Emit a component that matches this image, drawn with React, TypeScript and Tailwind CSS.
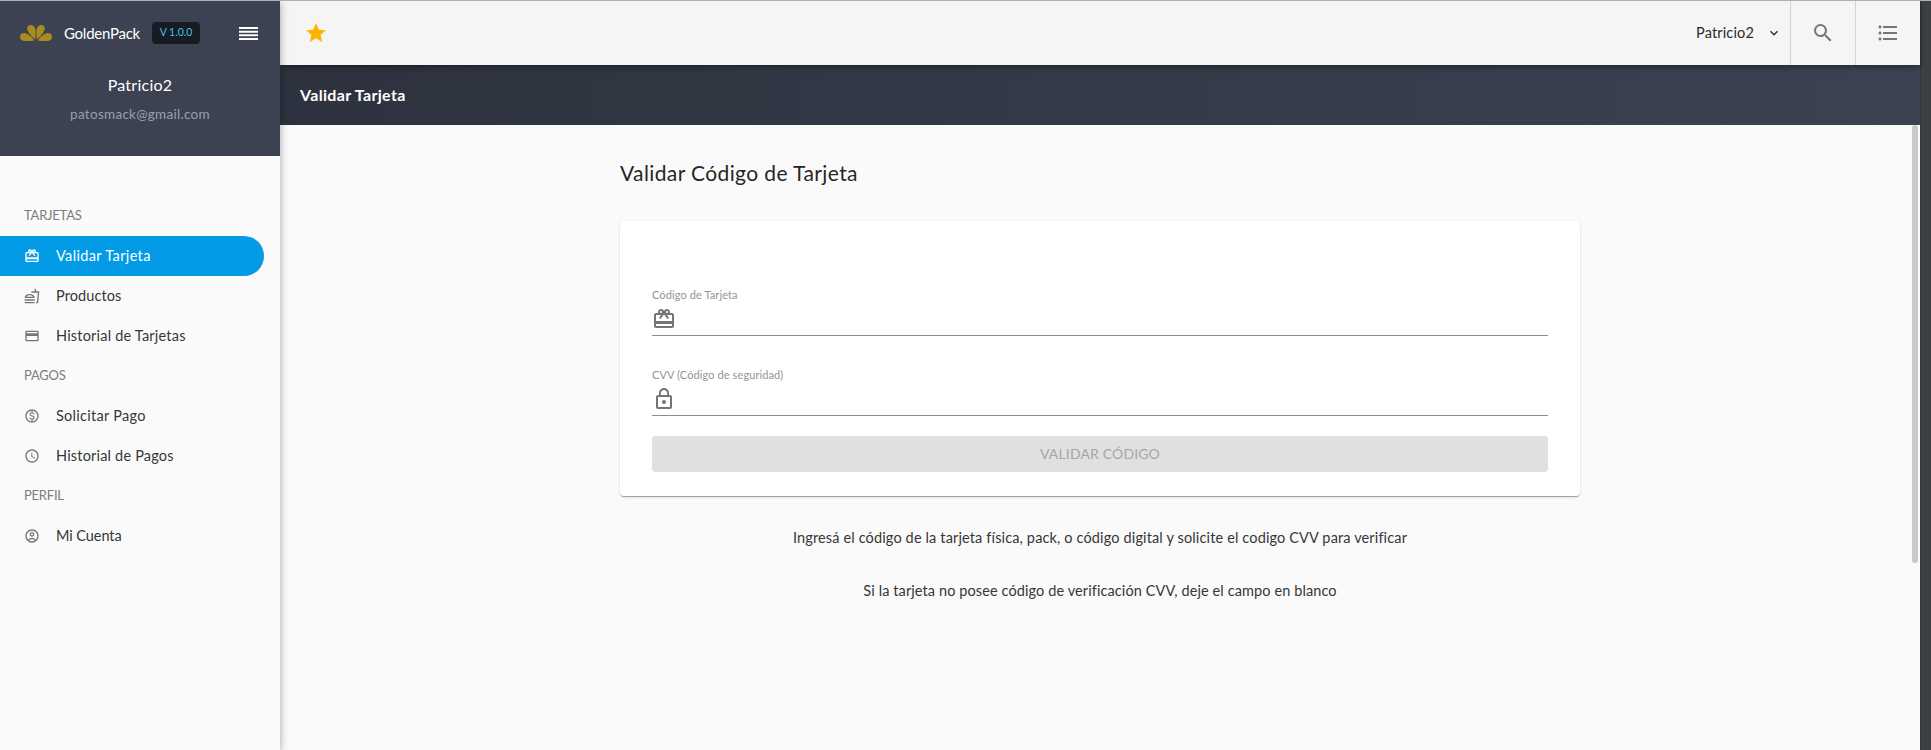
import type { ReactNode } from "react";
import type { IconType } from "react-icons";
import {
  MdAccessTime,
  MdFormatListBulleted,
  MdKeyboardArrowDown,
  MdLockOutline,
  MdOutlineAccountCircle,
  MdOutlineCreditCard,
  MdOutlineFastfood,
  MdOutlineMonetizationOn,
  MdRedeem,
  MdSearch,
  MdStar,
} from "react-icons/md";

function Logo() {
  return (
    <svg viewBox="0 0 32 16" className="h-4 w-8 shrink-0 fill-[#a98c1f]" aria-hidden="true">
      <path d="M15.2 14.6C12 12 7.2 7 7.2 3.6C7.2 1.3 8.8 0 10.7 0C13.7 0 15.4 2.5 15.6 6C15.7 9 15.5 12 15.2 14.6Z" />
      <path d="M16.8 14.6C20 12 24.8 7 24.8 3.6C24.8 1.3 23.2 0 21.3 0C18.3 0 16.6 2.5 16.4 6C16.3 9 16.5 12 16.8 14.6Z" />
      <path d="M14.3 15.5C11.5 16.2 7 16.2 4 15.9C1.5 15.6 0 14 0 12C0 9.5 1.7 8 4.3 8C8 8 11.5 12 14.3 15.5Z" />
      <path d="M17.7 15.5C20.5 16.2 25 16.2 28 15.9C30.5 15.6 32 14 32 12C32 9.5 30.3 8 27.7 8C24 8 20.5 12 17.7 15.5Z" />
    </svg>
  );
}

function MenuIcon() {
  return (
    <svg viewBox="0 0 19 13" className="ml-auto h-[13px] w-[19px] fill-white" aria-hidden="true">
      <path d="M0 0H19V2H0ZM0 3.67H19V5.67H0ZM0 7.33H19V9.33H0ZM0 11H19V13H0Z" />
    </svg>
  );
}

function Heading({ children }: { children: ReactNode }) {
  return (
    <h3 className="flex h-10 items-center pl-6 text-[13px] tracking-[-0.22px] text-[#7c7c7c]">{children}</h3>
  );
}

type NavItemProps = { icon: IconType; label: string; tracking: string; active?: boolean };

function NavItem({ icon: Icon, label, tracking, active }: NavItemProps) {
  return (
    <a
      className={`mr-4 flex h-10 items-center gap-4 rounded-r-full pl-6 text-[14.5px] ${
        active ? "bg-[#039be5] text-white" : "text-[#363636]"
      }`}
    >
      <Icon className={`size-4 shrink-0 ${active ? "text-white" : "text-[#757575]"}`} />
      <span className={tracking}>{label}</span>
    </a>
  );
}

function Sidebar() {
  return (
    <aside className="z-20 flex w-[280px] shrink-0 flex-col bg-[#fafafa] shadow-[0_2px_8px_rgba(0,0,0,0.35)]">
      <div className="h-[155px] bg-[#3c4252] text-white">
        <div className="flex h-16 items-center pl-5 pr-[22px]">
          <Logo />
          <span className="ml-3 text-[15px] leading-5 tracking-[-0.25px]">GoldenPack</span>
          <span className="ml-3 flex h-[22px] w-12 items-center justify-center rounded bg-[#181b21] text-[10.5px] text-[#46c1ee]">
            V 1.0.0
          </span>
          <MenuIcon />
        </div>
        <div className="flex flex-col items-center">
          <div className="mt-2 text-base leading-6 tracking-[0.25px]">Patricio2</div>
          <div className="mt-[7px] text-[13.5px] leading-5 tracking-[0.28px] text-[#9c9fa7]">patosmack@gmail.com</div>
        </div>
      </div>
      <nav className="pt-10">
        <Heading>TARJETAS</Heading>
        <NavItem icon={MdRedeem} label="Validar Tarjeta" tracking="tracking-[0.36px]" active />
        <NavItem icon={MdOutlineFastfood} label="Productos" tracking="tracking-[0.1px]" />
        <NavItem icon={MdOutlineCreditCard} label="Historial de Tarjetas" tracking="tracking-[0.2px]" />
        <Heading>PAGOS</Heading>
        <NavItem icon={MdOutlineMonetizationOn} label="Solicitar Pago" tracking="tracking-[0.28px]" />
        <NavItem icon={MdAccessTime} label="Historial de Pagos" tracking="tracking-[0.19px]" />
        <Heading>PERFIL</Heading>
        <NavItem icon={MdOutlineAccountCircle} label="Mi Cuenta" tracking="tracking-[-0.08px]" />
      </nav>
    </aside>
  );
}

function Toolbar() {
  return (
    <header className="z-10 flex h-16 shrink-0 items-center bg-[#f5f5f5] shadow-[0_2px_6px_rgba(0,0,0,0.4)]">
      <MdStar className="ml-6 size-6 text-[#ffb300]" />
      <button className="ml-auto flex h-full items-center text-[14.5px] tracking-[0.15px] text-[#2b2b2b]">
        Patricio2
        <MdKeyboardArrowDown className="ml-3 mr-2 size-4" />
      </button>
      <button className="flex h-full w-[65px] items-center justify-center border-l border-[#d4d4d4] text-[#757575]">
        <MdSearch className="size-6" />
      </button>
      <button className="flex h-full w-[65px] items-center justify-center border-l border-[#d4d4d4] text-[#757575]">
        <MdFormatListBulleted className="size-6" />
      </button>
    </header>
  );
}

function Field({ icon: Icon, label }: { icon: IconType; label: string }) {
  return (
    <label className="flex h-20 flex-col border-b border-[#8c8c8c] pt-[31px]">
      <span className="text-[11px] leading-4 tracking-[0.1px] text-[#949494]">{label}</span>
      <Icon className="mt-1 size-6 shrink-0 text-[#757575]" />
    </label>
  );
}

export default function App() {
  return (
    <div className="flex h-[750px] flex-col overflow-hidden border-t border-[#b0b0b0] bg-[#fafafa] font-[Lato,sans-serif] text-[#363636]">
      <div className="flex min-h-0 flex-1">
        <Sidebar />
        <div className="flex min-w-0 flex-1 flex-col">
          <Toolbar />
          <div className="flex h-[60px] shrink-0 items-center bg-linear-to-r from-[#2d323e] to-[#3c4252] pl-5 text-base font-bold tracking-[0.32px] text-white">
            Validar Tarjeta
          </div>
          <main className="flex min-h-0 flex-1">
            <div className="flex flex-1 flex-col items-center pl-2">
              <section className="w-[960px]">
                <h1 className="pt-8 text-[21px] leading-8 tracking-[0.39px] text-[#262626]">
                  Validar Código de Tarjeta
                </h1>
                <form className="mt-8 h-[275px] rounded bg-white px-8 pt-[35px] shadow-[0_2px_1px_-1px_rgba(0,0,0,0.2),0_1px_1px_rgba(0,0,0,0.14),0_1px_3px_rgba(0,0,0,0.12)]">
                  <Field icon={MdRedeem} label="Código de Tarjeta" />
                  <Field icon={MdLockOutline} label="CVV (Código de seguridad)" />
                  <button
                    type="button"
                    className="mt-5 flex h-9 w-full items-center justify-center rounded bg-[#e0e0e0] pb-0.5 text-[14px] tracking-[0.15px] text-[#a6a6a6]"
                  >
                    VALIDAR CÓDIGO
                  </button>
                </form>
                <p className="mt-8 text-center text-[14.5px] leading-5 tracking-[0.14px]">
                  Ingresá el código de la tarjeta física, pack, o código digital y solicite el codigo CVV para verificar
                </p>
                <p className="mt-[33px] text-center text-[14.5px] leading-5 tracking-[0.1px]">
                  Si la tarjeta no posee código de verificación CVV, deje el campo en blanco
                </p>
              </section>
            </div>
            <div className="mr-0.5 h-[438px] w-1.5 rounded-full bg-[#c9c9c9]" />
          </main>
        </div>
        <div className="w-[11px] shrink-0 border-l border-[#323638] bg-[#3c4042]" />
      </div>
    </div>
  );
}
